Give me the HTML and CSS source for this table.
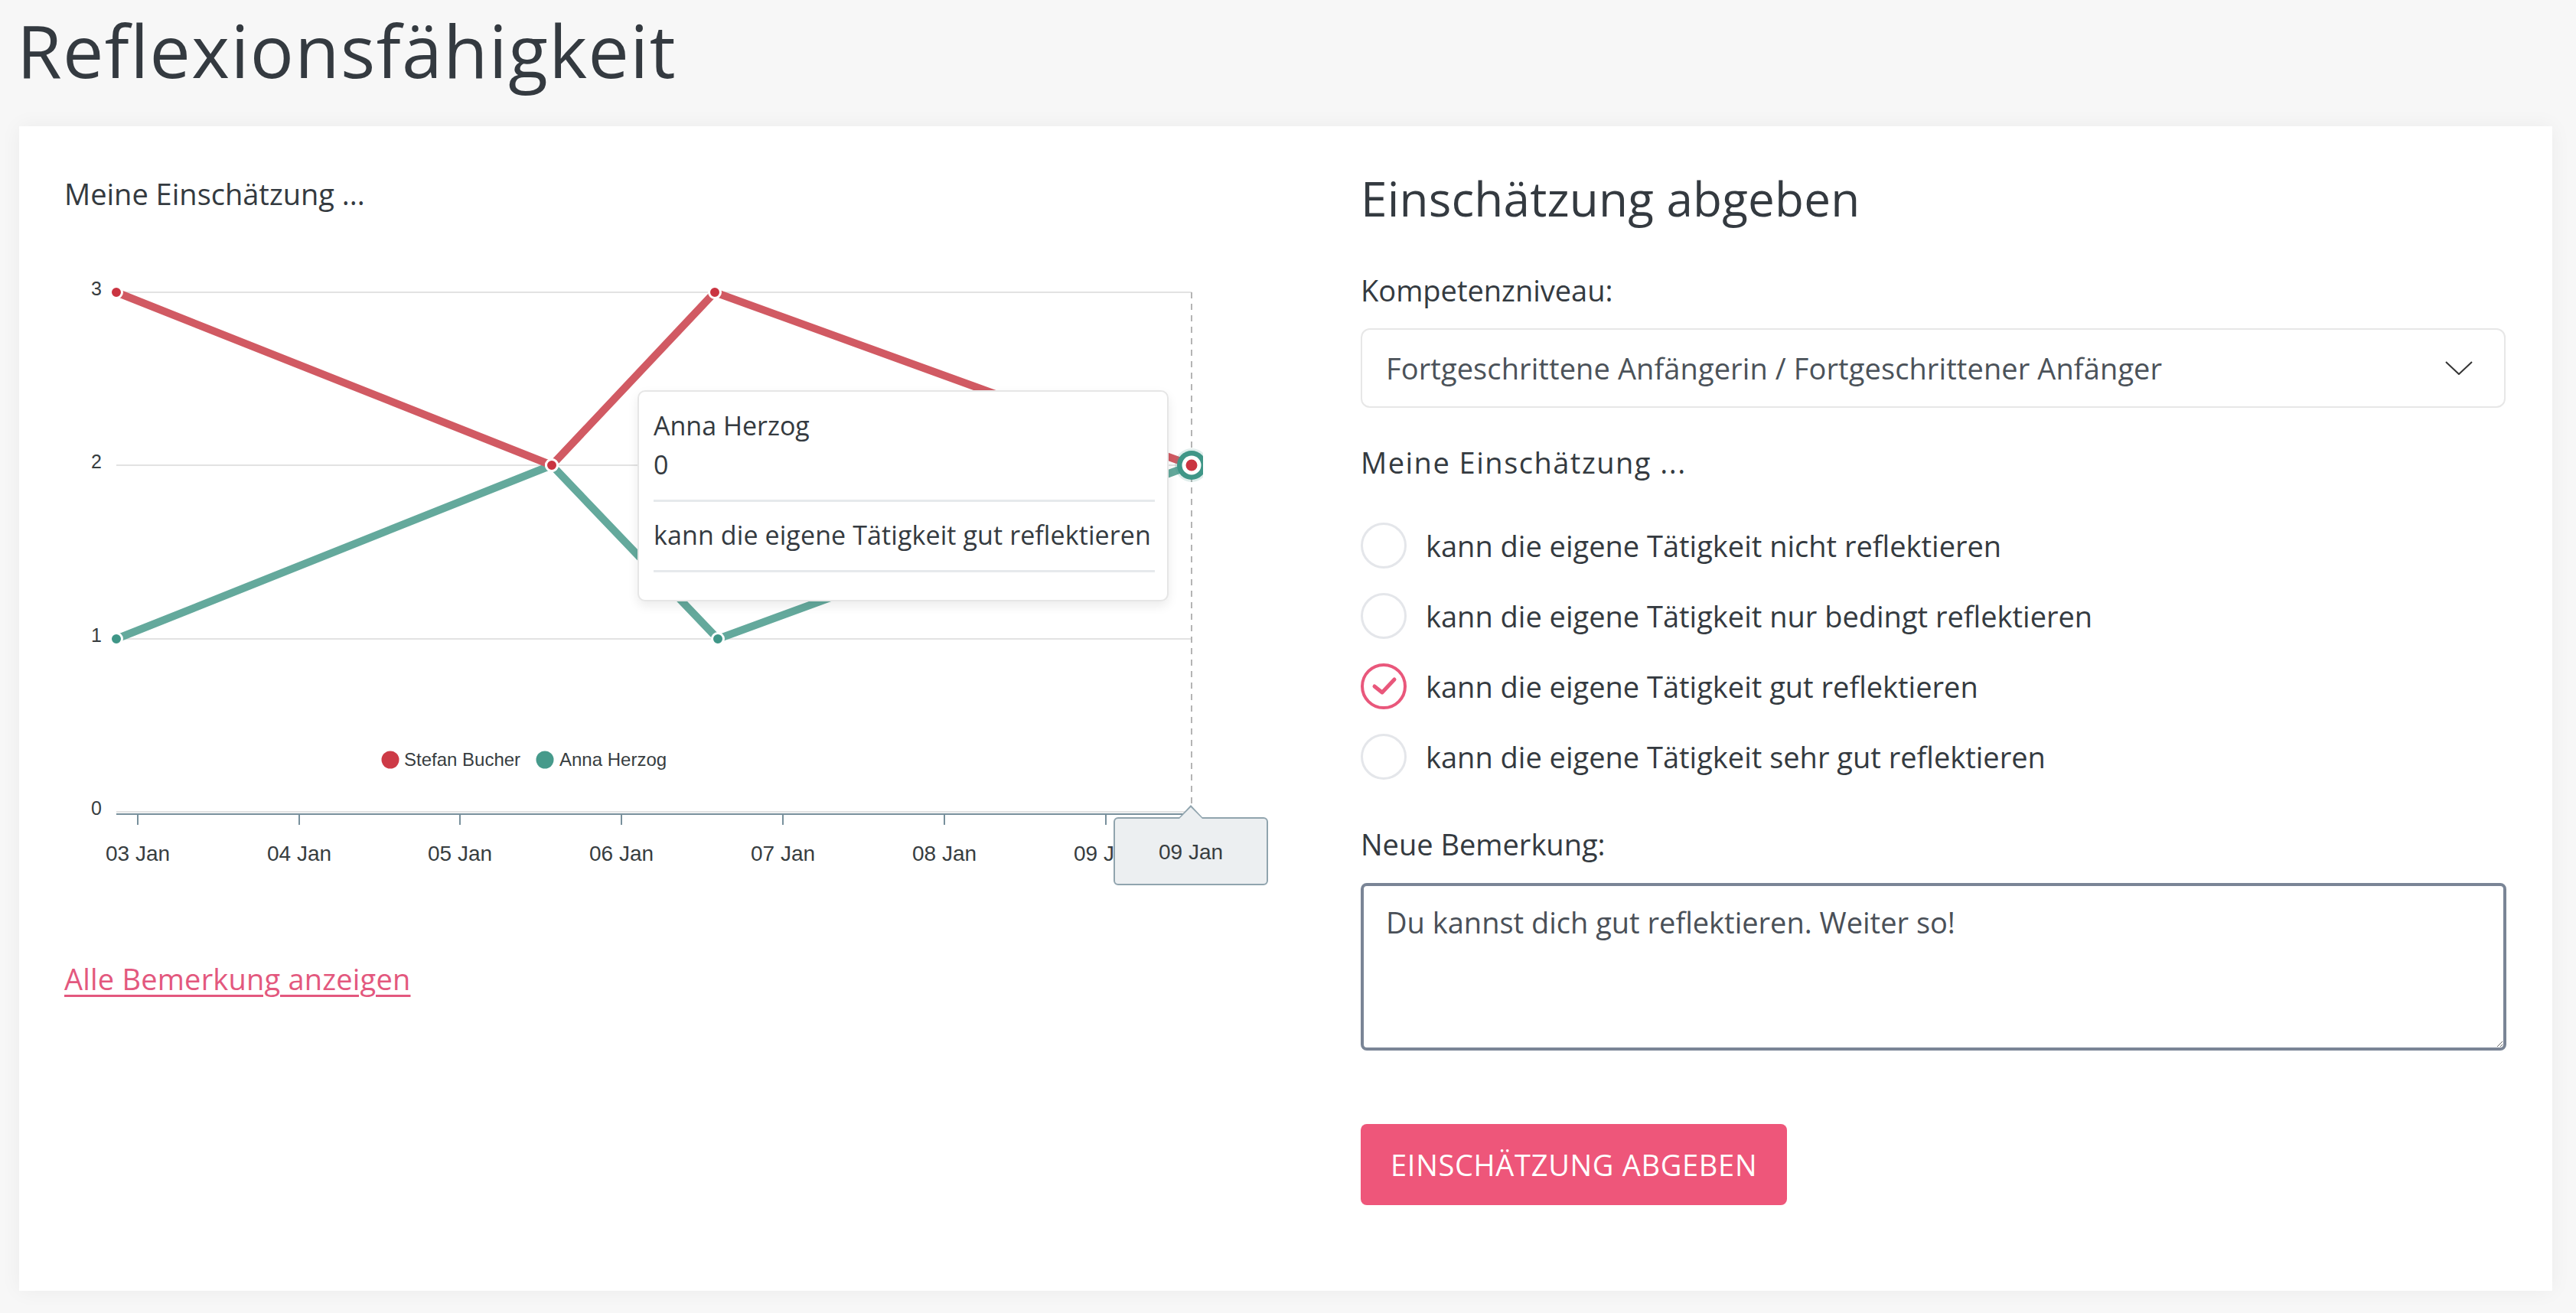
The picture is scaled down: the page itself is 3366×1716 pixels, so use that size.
FILE: index.html
```html
<!DOCTYPE html>
<html lang="de">
<head>
<meta charset="utf-8">
<title>Reflexionsfähigkeit</title>
<link rel="stylesheet" href="styles.css">
</head>
<body>
<h1 class="page-title">Reflexionsfähigkeit</h1>
<main class="card">
  <section class="col-left">
    <p class="chart-label">Meine Einschätzung ...</p>
    <div class="chart">
      <svg class="chart-svg" width="1580" height="890" viewBox="0 0 1580 890">
        <defs>
          <clipPath id="plotclip"><rect x="0" y="0" width="1488" height="890"/></clipPath>
        </defs>
        <g class="grid">
          <line x1="68" y1="101" x2="1473" y2="101"/>
          <line x1="68" y1="327" x2="1473" y2="327"/>
          <line x1="68" y1="554" x2="1473" y2="554"/>
          <line x1="68" y1="780" x2="1473" y2="780"/>
        </g>
        <g class="ylabels">
          <text x="49" y="105">3</text>
          <text x="49" y="331">2</text>
          <text x="49" y="558">1</text>
          <text x="49" y="784">0</text>
        </g>
        <line class="crosshair" x1="1473" y1="101" x2="1473" y2="771"/>
        <line class="axis" x1="68" y1="783" x2="1473" y2="783"/>
        <g class="ticks">
          <line x1="96" y1="783" x2="96" y2="797"/>
          <line x1="307" y1="783" x2="307" y2="797"/>
          <line x1="517" y1="783" x2="517" y2="797"/>
          <line x1="728" y1="783" x2="728" y2="797"/>
          <line x1="939" y1="783" x2="939" y2="797"/>
          <line x1="1150" y1="783" x2="1150" y2="797"/>
          <line x1="1361" y1="783" x2="1361" y2="797"/>
        </g>
        <g class="xlabels">
          <text x="96" y="844">03 Jan</text>
          <text x="307" y="844">04 Jan</text>
          <text x="517" y="844">05 Jan</text>
          <text x="728" y="844">06 Jan</text>
          <text x="939" y="844">07 Jan</text>
          <text x="1150" y="844">08 Jan</text>
          <text x="1361" y="844">09 Jan</text>
        </g>
        <polyline class="line-anna" points="68,554 637,327 854,554 1473,327"/>
        <polyline class="line-stefan" points="68,101 637,327 850,101 1473,327"/>
        <g class="markers-anna">
          <circle cx="68" cy="554" r="7.5"/>
          <circle cx="637" cy="327" r="7.5"/>
          <circle cx="854" cy="554" r="7.5"/>
        </g>
        <g class="markers-stefan">
          <circle cx="68" cy="101" r="7.5"/>
          <circle cx="637" cy="327" r="7.5"/>
          <circle cx="850" cy="101" r="7.5"/>
        </g>
        <g clip-path="url(#plotclip)">
          <circle class="hover-halo" cx="1473" cy="327" r="22"/>
          <circle class="hover-anna" cx="1473" cy="327" r="19"/>
          <circle class="hover-white" cx="1473" cy="327" r="12.5"/>
          <circle class="hover-stefan" cx="1473" cy="327" r="7.5"/>
        </g>
        <g class="legend">
          <circle class="legend-stefan" cx="426" cy="712" r="11.5"/>
          <text x="444" y="720">Stefan Bucher</text>
          <circle class="legend-anna" cx="628" cy="712" r="11.5"/>
          <text x="647" y="720">Anna Herzog</text>
        </g>
      </svg>
      <div class="tooltip">
        <div class="tt-line">Anna Herzog</div>
        <div class="tt-line">0</div>
        <div class="tt-divider"></div>
        <div class="tt-line tt-text">kann die eigene Tätigkeit gut reflektieren</div>
        <div class="tt-divider"></div>
      </div>
      <div class="x-tooltip">09 Jan</div>
    </div>
    <a class="all-link" href="#">Alle Bemerkung anzeigen</a>
  </section>

  <section class="col-right">
    <h2 class="form-title">Einschätzung abgeben</h2>
    <label class="field-label label-level">Kompetenzniveau:</label>
    <div class="select">
      <span class="select-value">Fortgeschrittene Anfängerin / Fortgeschrittener Anfänger</span>
      <svg class="chevron" width="36" height="18" viewBox="0 0 36 18"><path d="M1 1 L18 17 L35 1"/></svg>
    </div>
    <h3 class="group-label">Meine Einschätzung ...</h3>
    <ul class="radios">
      <li class="radio"><span class="radio-circle"></span><span class="radio-text">kann die eigene Tätigkeit nicht reflektieren</span></li>
      <li class="radio"><span class="radio-circle"></span><span class="radio-text">kann die eigene Tätigkeit nur bedingt reflektieren</span></li>
      <li class="radio"><span class="radio-circle is-checked"><svg class="check" width="52" height="52" viewBox="0 0 52 52"><path d="M14 26 L24 34 L40 17"/></svg></span><span class="radio-text">kann die eigene Tätigkeit gut reflektieren</span></li>
      <li class="radio"><span class="radio-circle"></span><span class="radio-text">kann die eigene Tätigkeit sehr gut reflektieren</span></li>
    </ul>
    <label class="field-label label-comment" for="comment">Neue Bemerkung:</label>
    <textarea id="comment" class="comment">Du kannst dich gut reflektieren. Weiter so!</textarea>
    <button class="submit" type="button">EINSCHÄTZUNG ABGEBEN</button>
  </section>
</main>
</body>
</html>
```

FILE: styles.css
```css
html, body {
  margin: 0;
  padding: 0;
}

body {
  width: 3366px;
  height: 1716px;
  overflow: hidden;
  background: #f7f7f7;
  font-family: "Open Sans", "Liberation Sans", sans-serif;
  color: #343a40;
}

.page-title {
  margin: 0 0 35px 22px;
  padding-top: 0;
  font-size: 95px;
  line-height: 130px;
  letter-spacing: 1.4px;
  font-weight: 400;
  color: #343a40;
}

.card {
  box-sizing: border-box;
  margin: 0 31px 0 25px;
  height: 1522px;
  padding: 0 59px;
  background: #ffffff;
  box-shadow: 0 0 26px rgba(0, 0, 0, 0.05);
  display: grid;
  grid-template-columns: 1498px 1498px;
  column-gap: 196px;
  align-items: start;
}

/* ---------- left column ---------- */
.col-left {
  padding-top: 60px;
  display: flex;
  flex-direction: column;
  align-items: flex-start;
}

.chart-label {
  margin: 0;
  font-size: 38px;
  line-height: 56px;
  color: #343a40;
}

.chart {
  position: relative;
  width: 1498px;
  height: 890px;
}

.chart-svg {
  display: block;
  overflow: visible;
  font-family: "Liberation Sans", Arial, sans-serif;
}

.grid line {
  stroke: #e2e2e2;
  stroke-width: 2;
}

.ylabels text {
  font-size: 25px;
  fill: #373d3f;
  text-anchor: end;
}

.xlabels text {
  font-size: 28px;
  fill: #373d3f;
  text-anchor: middle;
}

.crosshair {
  stroke: #b4b4b4;
  stroke-width: 2;
  stroke-dasharray: 8 7;
}

.axis {
  stroke: #78909c;
  stroke-width: 2;
}

.ticks line {
  stroke: #78909c;
  stroke-width: 2;
}

.line-anna,
.line-stefan {
  fill: none;
  stroke-width: 10;
  stroke-linejoin: round;
}

.line-anna { stroke: #64a99c; }
.line-stefan { stroke: #d15a63; }

.markers-anna circle,
.markers-stefan circle {
  stroke: #ffffff;
  stroke-width: 3;
}

.markers-anna circle { fill: #3f9687; }
.markers-stefan circle { fill: #ca3441; }

.hover-halo { fill: #3f9687; opacity: 0.16; }
.hover-anna { fill: #3f9687; }
.hover-white { fill: #ffffff; }
.hover-stefan { fill: #ca3441; }

.legend text {
  font-size: 24px;
  fill: #373d3f;
}

.legend-stefan { fill: #cd3a46; }
.legend-anna { fill: #469a8b; }

.tooltip {
  position: absolute;
  left: 749px;
  top: 229px;
  box-sizing: border-box;
  width: 694px;
  height: 276px;
  padding: 19px 16px 0 19px;
  background: #ffffff;
  border: 2px solid #e6e6e6;
  border-radius: 10px;
  box-shadow: 0 6px 14px rgba(0, 0, 0, 0.08);
  font-size: 34px;
  line-height: 51px;
  color: #343a40;
}

.tt-line {
  white-space: nowrap;
}

.tt-divider {
  height: 3px;
  margin-top: 20px;
  background: #e6e9ec;
}

.tt-text {
  margin-top: 18px;
  letter-spacing: 0.1px;
}

.x-tooltip {
  position: absolute;
  left: 1371px;
  top: 787px;
  box-sizing: border-box;
  width: 202px;
  height: 89px;
  padding-top: 2px;
  background: #eceff1;
  border: 2px solid #90a4ae;
  border-radius: 6px;
  font-family: "Liberation Sans", Arial, sans-serif;
  font-size: 28px;
  line-height: 83px;
  text-align: center;
  color: #373d3f;
}

.x-tooltip::before,
.x-tooltip::after {
  content: "";
  position: absolute;
  left: 50%;
  width: 0;
  height: 0;
  border-left: 15px solid transparent;
  border-right: 15px solid transparent;
  transform: translateX(-50%);
}

.x-tooltip::before {
  top: -18px;
  border-bottom: 16px solid #90a4ae;
}

.x-tooltip::after {
  top: -15px;
  border-bottom: 15px solid #eceff1;
}

.all-link {
  margin-top: 80px;
  font-size: 38px;
  line-height: 57px;
  letter-spacing: 0.2px;
  color: #e3587e;
  text-decoration: underline;
  text-decoration-thickness: 3px;
  text-underline-offset: 6px;
}

/* ---------- right column ---------- */
.col-right {
  padding-top: 57px;
  display: flex;
  flex-direction: column;
  align-items: flex-start;
}

.form-title {
  margin: 0;
  font-size: 62px;
  line-height: 74px;
  font-weight: 400;
  letter-spacing: 0.2px;
  color: #343a40;
}

.field-label {
  display: block;
  font-size: 38px;
  line-height: 57px;
  color: #343a40;
}

.label-level { margin-top: 55px; }
.label-comment { margin-top: 40px; }

.select {
  box-sizing: border-box;
  align-self: stretch;
  width: 1496px;
  height: 104px;
  margin-top: 21px;
  padding: 0 41px 0 31px;
  border: 2px solid #e7e7e7;
  border-radius: 12px;
  display: flex;
  align-items: center;
  justify-content: space-between;
}

.select-value {
  font-size: 38px;
  line-height: 57px;
  letter-spacing: 0.1px;
  color: #4b5259;
}

.chevron path {
  fill: none;
  stroke: #333333;
  stroke-width: 2;
}

.group-label {
  margin: 43px 0 0;
  font-size: 38px;
  line-height: 57px;
  font-weight: 500;
  letter-spacing: 1.5px;
  color: #343a40;
}

.radios {
  list-style: none;
  margin: 34px 0 0;
  padding: 0;
}

.radio {
  height: 92px;
  display: flex;
  align-items: center;
  gap: 25px;
}

.radio-circle {
  box-sizing: border-box;
  flex: none;
  width: 60px;
  height: 60px;
  border: 3px solid #e4e6ea;
  border-radius: 50%;
  display: flex;
  align-items: center;
  justify-content: center;
}

.radio-circle.is-checked {
  border: 4px solid #e9577b;
}

.check path {
  fill: none;
  stroke: #e9577b;
  stroke-width: 5;
  stroke-linecap: round;
  stroke-linejoin: round;
}

.radio-text {
  font-size: 38px;
  line-height: 57px;
  color: #343a40;
}

.comment {
  box-sizing: border-box;
  display: block;
  align-self: stretch;
  width: 1497px;
  height: 219px;
  margin-top: 22px;
  padding: 19px 29px;
  border: 4px solid #7a8596;
  border-radius: 8px;
  font-family: "Open Sans", "Liberation Sans", sans-serif;
  font-size: 38px;
  line-height: 57px;
  color: #4a5058;
  background: #ffffff;
  outline: none;
}

.submit {
  height: 106px;
  margin-top: 96px;
  padding: 0 39px;
  border: 0;
  border-radius: 8px;
  background: #ee567a;
  color: #ffffff;
  font-family: "Open Sans", "Liberation Sans", sans-serif;
  font-size: 38px;
  letter-spacing: 0.7px;
  cursor: pointer;
}
```
